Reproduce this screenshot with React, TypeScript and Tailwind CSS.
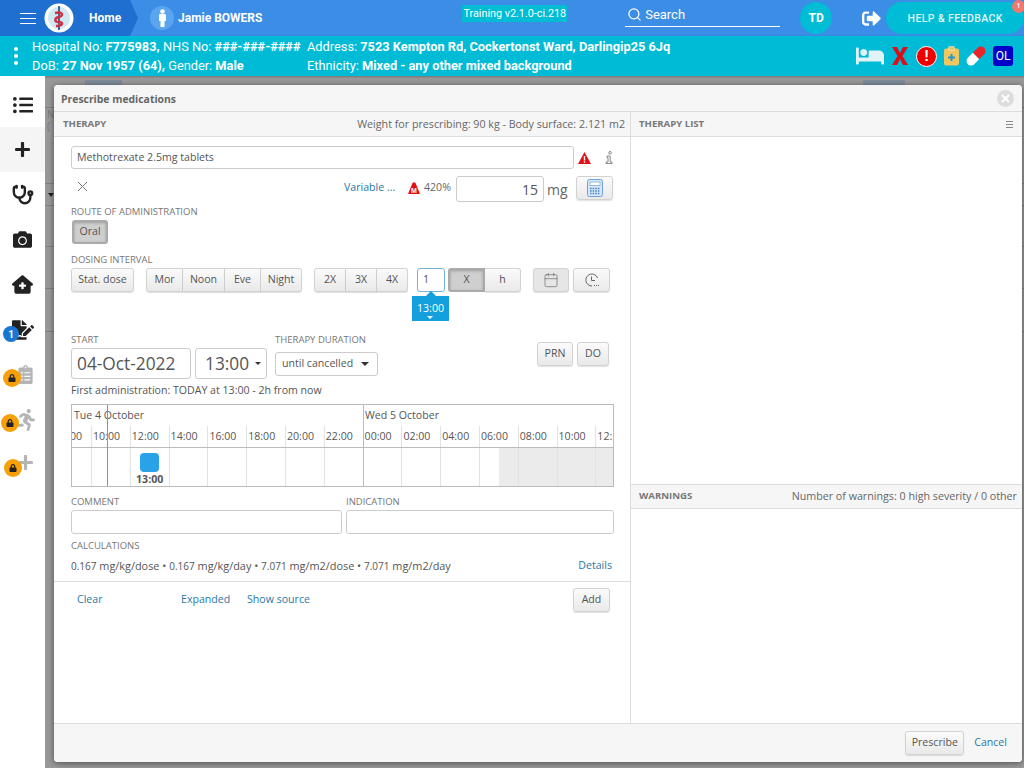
import { Calendar, Search, Stethoscope } from "lucide-react";
import { FaCamera, FaListUl, FaLock, FaPlus, FaRunning, FaSignOutAlt, FaBed, FaFileSignature, FaClipboardList } from "react-icons/fa";
import { FaHouseMedical } from "react-icons/fa6";

const label = "text-[9.5px] leading-[12px] text-[#777] uppercase";
const btn =
  "flex items-center justify-center h-[24px] border border-[#d2d2d2] rounded-[3px] bg-gradient-to-b from-[#fbfbfb] to-[#e9e9e9] text-[10.6px] text-[#555] shadow-[0_1px_1px_rgba(0,0,0,0.12)]";
const pressed = "border-2 !border-[#aaa] !bg-none bg-[#cfcfcf] !shadow-[inset_0_1px_3px_rgba(0,0,0,0.25)]";
const link = "text-[10.6px] text-[#2b78a8]";
const hours = ["08:00", "10:00", "12:00", "14:00", "16:00", "18:00", "20:00", "22:00", "00:00", "02:00", "04:00", "06:00", "08:00", "10:00", "12:"];

function Logo() {
  return (
    <svg width="30" height="30" viewBox="0 0 30 30" className="shrink-0">
      <circle cx="15" cy="15" r="14.5" fill="#fff" />
      <circle cx="15" cy="15" r="11" fill="#cfe8f3" />
      <path d="M15 3 L15 27" stroke="#20446e" strokeWidth="1.6" />
      <path d="M11 10 C 19 8 20 13 15 14 C 10 15 10 19 15 19 C 20 19 19 23 12 23" stroke="#d03040" strokeWidth="2.4" fill="none" />
    </svg>
  );
}

function Locked({ children, left }: { children: React.ReactNode; left: string }) {
  return (
    <div className="relative h-[45px] flex items-center justify-center text-[#b5b5b5]">
      {children}
      <span className={`absolute ${left} top-[17px] w-[18px] h-[18px] rounded-full bg-[#f7a008] flex items-center justify-center text-[#222]`}>
        <FaLock size={8} />
      </span>
    </div>
  );
}

function Sidebar() {
  return (
    <div className="w-[45px] shrink-0 bg-white flex flex-col text-[#222] pt-[6px]">
      <div className="h-[45px] flex items-center justify-center">
        <FaListUl size={20} />
      </div>
      <div className="h-[45px] flex items-center justify-center bg-[#f5f5f5]">
        <FaPlus size={17} />
      </div>
      <div className="h-[45px] flex items-center justify-center">
        <Stethoscope size={22} strokeWidth={2.6} />
      </div>
      <div className="h-[45px] flex items-center justify-center">
        <FaCamera size={19} />
      </div>
      <div className="h-[45px] flex items-center justify-center">
        <FaHouseMedical size={21} />
      </div>
      <div className="relative h-[45px] flex items-center justify-center">
        <FaFileSignature size={22} />
        <span className="absolute left-[3px] top-[19px] w-[16px] h-[16px] rounded-full bg-[#1976d2] text-white text-[10px] font-bold flex items-center justify-center font-['Roboto',sans-serif]">
          1
        </span>
      </div>
      <Locked left="left-[3px]">
        <span className="ml-[6px]">
          <FaClipboardList size={19} />
        </span>
      </Locked>
      <Locked left="left-[1px]">
        <span className="ml-[6px]">
          <FaRunning size={22} />
        </span>
      </Locked>
      <Locked left="left-[4px]">
        <span className="ml-[6px] mt-[-4px]">
          <FaPlus size={17} />
        </span>
      </Locked>
    </div>
  );
}

function PageBehind() {
  return (
    <div className="flex-1 min-w-0 flex flex-col">
      <div className="flex h-[9px] pt-[4px]">
        <div className="ml-[40px] w-[37px] bg-[#7f8c99]" />
        <div className="ml-[741px] w-[42px] bg-[#7f8c99]" />
      </div>
      <div className="h-[23px] border-b border-[#808080]" />
      <div className="h-[76px] border-b border-[#808080] pl-[2px] text-[10px] leading-[12px] text-[#777]">
        N
        <br />(
      </div>
      <div className="h-[22px] border-b border-[#808080] flex items-center pl-[3px]">
        <span className="w-0 h-0 border-x-[3px] border-x-transparent border-t-[4px] border-t-[#222]" />
      </div>
      <div className="h-[41px] border-b border-[#808080]" />
      <div className="h-[42px] border-b border-[#808080]" />
      <div className="h-[43px] border-b border-[#808080]" />
    </div>
  );
}

function Timeline() {
  return (
    <div className="relative mt-[6px] w-[543px] h-[83px] border border-[#bbb] overflow-hidden text-[#555]">
      <div className="flex h-[21px] items-center text-[10.6px]">
        <span className="w-[291px] pl-[2px]">Tue 4 October</span>
        <span className="h-full flex items-center pl-px border-l border-[#bbb]">Wed 5 October</span>
      </div>
      <div className="grid grid-cols-[19px_repeat(14,38.8px)] h-[22px] text-[10.6px] border-b border-[#bbb]">
        {hours.map((h, i) => (
          <div
            key={i}
            className={`flex items-center overflow-hidden whitespace-nowrap ${i === 0 ? "justify-end pr-[9px]" : "pl-px border-l"} ${i === 8 ? "border-[#bbb]" : "border-[#e2e2e2]"}`}
          >
            {h}
          </div>
        ))}
      </div>
      <div className="grid grid-cols-[19px_repeat(14,38.8px)] h-[39px]">
        {hours.map((h, i) => (
          <div key={i} className={`relative ${i === 0 ? "" : "border-l"} ${i === 8 ? "border-[#bbb]" : "border-[#e2e2e2]"}`}>
            {i > 10 && <div className={`absolute inset-y-0 right-0 bg-[#ebebeb] ${i === 11 ? "w-[19px]" : "left-0"}`} />}
            {i === 2 && (
              <div className="flex flex-col items-center pt-[5px]">
                <div className="w-[19px] h-[19px] rounded-[4px] bg-[#29a3e8]" />
                <span className="text-[10.6px] leading-[14px] font-bold text-[#555]">13:00</span>
              </div>
            )}
          </div>
        ))}
      </div>
      <div className="absolute left-[35px] top-0 bottom-0 w-px bg-[#d9756b]" />
    </div>
  );
}

function TherapyPanel() {
  return (
    <div className="w-[577px] shrink-0 border-r border-[#ddd] flex flex-col">
      <div className="h-[25px] flex items-center justify-between pl-[9px] pr-[5px] bg-[#f6f6f6] border-b border-[#ddd]">
        <span className="text-[9.6px] font-bold text-[#777]">THERAPY</span>
        <span className="text-[10.7px] text-[#666]">Weight for prescribing: 90 kg - Body surface: 2.121 m2</span>
      </div>
      <div className="pl-[17px] pr-[16px] pt-[9px] flex-none">
        <div className="flex items-center">
          <div className="w-[503px] h-[23px] border border-[#ccc] rounded-[3px] px-[5px] flex items-center text-[10.6px] text-[#555]">
            Methotrexate 2.5mg tablets
          </div>
          <svg width="13" height="12" viewBox="0 0 13 12" className="ml-[4px]">
            <path d="M6.5 0 L13 12 L0 12 Z" fill="#e30f17" />
            <rect x="5.8" y="4" width="1.4" height="4.5" fill="#fff" />
            <rect x="5.8" y="9.3" width="1.4" height="1.5" fill="#fff" />
          </svg>
          <svg width="8" height="13" viewBox="0 0 8 13" fill="none" stroke="#888" strokeWidth="1" className="ml-[14px]">
            <circle cx="5" cy="1.8" r="1.3" />
            <path d="M2 5 H5.2 V11 H7 V12.5 H1 V11 H3 V6.5 H2 Z" />
          </svg>
        </div>
        <div className="flex items-center h-[26px] mt-[7px]">
          <span className="w-[24px] pl-[6px] -translate-y-[3px]">
            <svg width="11" height="11" viewBox="0 0 11 11" stroke="#777" strokeWidth="1">
              <path d="M1 1 L10 10 M10 1 L1 10" />
            </svg>
          </span>
          <span className={`${link} ml-[249px] w-[64px] -translate-y-px`}>Variable ...</span>
          <svg width="12" height="12" viewBox="0 0 12 12" className="-translate-y-px">
            <path d="M4.5 1 Q6 -0.5 7.5 1 L12 12 H0 Z" fill="#e30f17" />
            <text x="6" y="10.5" fontSize="7" fontWeight="700" fill="#fff" textAnchor="middle" fontFamily="Liberation Sans">M</text>
          </svg>
          <span className="ml-[4px] w-[27px] text-[10.6px] text-[#666] -translate-y-px">420%</span>
          <div className="ml-[5px] w-[88px] h-[26px] border border-[#ccc] rounded-[3px] flex items-center justify-end pr-[5px] text-[14px] text-[#555]">
            15
          </div>
          <span className="ml-[3px] text-[14px] text-[#666] w-[29px]">mg</span>
          <div className={`${btn} w-[37px] -translate-y-px`}>
            <svg width="16" height="18" viewBox="0 0 16 18" fill="none">
              <rect x="0.5" y="0.5" width="15" height="17" rx="2" fill="#d8e8f8" stroke="#6fa0d6" />
              <rect x="3" y="3" width="10" height="3.5" fill="#fff" stroke="#6fa0d6" strokeWidth="0.7" />
              <path d="M3 9.5h10M3 12h10M3 14.5h10" stroke="#4a86c5" strokeWidth="1.3" strokeDasharray="1.6 1" />
            </svg>
          </div>
        </div>
        <div className={`${label} mt-[4px]`}>Route of administration</div>
        <div className={`${btn} ${pressed} mt-[2px] ml-px w-[36px]`}>Oral</div>
        <div className={`${label} mt-[10px]`}>Dosing interval</div>
        <div className="flex mt-[2px] items-start">
          <div className={`${btn} w-[63px]`}>Stat. dose</div>
          <div className="ml-[12px] flex">
            <div className={`${btn} w-[37px] rounded-r-none`}>Mor</div>
            <div className={`${btn} w-[42px] rounded-none border-l-0`}>Noon</div>
            <div className={`${btn} w-[36px] rounded-none border-l-0`}>Eve</div>
            <div className={`${btn} w-[41px] rounded-l-none border-l-0`}>Night</div>
          </div>
          <div className="ml-[12px] flex">
            <div className={`${btn} w-[32px] rounded-r-none`}>2X</div>
            <div className={`${btn} w-[31px] rounded-none border-l-0`}>3X</div>
            <div className={`${btn} w-[31px] rounded-l-none border-l-0`}>4X</div>
          </div>
          <div className="relative ml-[9px]">
            <div className="w-[28px] h-[24px] border border-[#6db3de] rounded-[3px] flex items-center pl-[5px] text-[10.6px] text-[#555]">1</div>
            <div className="absolute left-[-5px] top-[28px] w-[37px] h-[25px] bg-[#14a0dd] text-white text-[10.6px] flex items-center justify-center">
              <span className="absolute top-[-5px] left-[13px] w-0 h-0 border-x-[6px] border-x-transparent border-b-[6px] border-b-[#14a0dd]" />
              13:00
              <span className="absolute bottom-[2px] left-[15px] w-0 h-0 border-x-[3px] border-x-transparent border-t-[3px] border-t-white" />
            </div>
          </div>
          <div className="ml-[3px] flex">
            <div className={`${btn} ${pressed} w-[37px] rounded-r-none`}>X</div>
            <div className={`${btn} w-[36px] rounded-l-none border-l-0`}>h</div>
          </div>
          <div className={`${btn} ml-[12px] w-[36px] !bg-none bg-[#e6e6e6]`}>
            <Calendar size={16} strokeWidth={1} color="#666" />
          </div>
          <div className={`${btn} ml-[4px] w-[37px]`}>
            <svg width="16" height="16" viewBox="0 0 16 16" fill="none" stroke="#666" strokeWidth="1">
              <path d="M13.5 6 A6 6 0 1 0 8 14" />
              <path d="M7.5 4.5 V8.5 H11" />
              <path d="M10 13.5h1M12 13.5h1M14 13.5h1" />
            </svg>
          </div>
        </div>
        <div className="flex mt-[42px]">
          <div className="w-[204px]">
            <div className={label}>Start</div>
            <div className="flex gap-[4px] mt-[2px]">
              <div className="w-[120px] h-[31px] border border-[#ccc] rounded-[3px] flex items-center pl-[5px] text-[17.3px] text-[#555]">04-Oct-2022</div>
              <div className="w-[72px] h-[31px] border border-[#ccc] rounded-[3px] flex items-center pl-[9px] text-[17.3px] text-[#555]">
                13:00
                <span className="ml-[6px] w-0 h-0 border-x-[3px] border-x-transparent border-t-[3px] border-t-[#333]" />
              </div>
            </div>
          </div>
          <div className="w-[262px]">
            <div className={label}>Therapy duration</div>
            <div className="mt-[6px] w-[103px] h-[24px] border border-[#ccc] rounded-[3px] flex items-center pl-[6px] text-[10.6px] text-[#555]">
              until cancelled
              <span className="ml-[8px] w-0 h-0 border-x-[4px] border-x-transparent border-t-[4px] border-t-[#333]" />
            </div>
          </div>
          <div className="flex gap-[4px] items-start mt-[3px] pt-[5px]">
            <div className={`${btn} w-[36px]`}>PRN</div>
            <div className={`${btn} w-[32px]`}>DO</div>
          </div>
        </div>
        <div className="mt-[4px] text-[10.6px] leading-[15px] text-[#555]">First administration: TODAY at 13:00 - 2h from now</div>
        <Timeline />
        <div className="flex gap-[4px] mt-[9px] w-[543px]">
          <div className="w-[271px]">
            <div className={label}>Comment</div>
            <div className="mt-[2px] h-[24px] border border-[#ccc] rounded-[3px]" />
          </div>
          <div className="flex-1">
            <div className={label}>Indication</div>
            <div className="mt-[2px] h-[24px] border border-[#ccc] rounded-[3px]" />
          </div>
        </div>
        <div className={`${label} mt-[6px]`}>Calculations</div>
        <div className="flex items-center justify-between w-[541px] mt-[6px] h-[16px] text-[#555] text-[10.9px]">
          <span>
            <span className="text-[10px]">0.167</span> mg/kg/dose • <span className="text-[10px]">0.167</span> mg/kg/day • <span className="text-[10px]">7.071</span> mg/m2/dose • <span className="text-[10px]">7.071</span> mg/m2/day
          </span>
          <span className={link}>Details</span>
        </div>
      </div>
      <div className="mt-[7px] border-t border-[#ddd] pt-[6px] pl-[23px] pr-[20px] flex items-center">
        <span className={`${link} w-[104px]`}>Clear</span>
        <span className={`${link} w-[66px]`}>Expanded</span>
        <span className={link}>Show source</span>
        <div className={`${btn} ml-auto w-[37px]`}>Add</div>
      </div>
    </div>
  );
}

function RightPanel() {
  return (
    <div className="flex-1 flex flex-col">
      <div className="h-[25px] flex items-center justify-between pl-[8px] pr-[9px] bg-[#f6f6f6] border-b border-[#ddd]">
        <span className="text-[9.6px] font-bold text-[#777]">THERAPY LIST</span>
        <span className="w-[7px] h-[7px] border-y border-[#888] flex items-center">
          <span className="w-full h-px bg-[#888]" />
        </span>
      </div>
      <div className="h-[347px]" />
      <div className="h-[25px] flex items-center justify-between pl-[8px] pr-[5px] bg-[#f6f6f6] border-y border-[#ddd]">
        <span className="text-[9.6px] font-bold text-[#777]">WARNINGS</span>
        <span className="text-[10.7px] text-[#666]">Number of warnings: 0 high severity / 0 other</span>
      </div>
    </div>
  );
}

export default function App() {
  return (
    <div className="relative w-[1024px] h-[768px] overflow-hidden bg-[#999] font-['Open_Sans',sans-serif]">
      <div className="h-[36px] flex items-center bg-[#3b8de6] text-white font-['Roboto',sans-serif]">
        <div className="relative h-full w-[130px] shrink-0 bg-[#1e6fcf] flex items-center pl-[20px]">
          <span className="flex flex-col gap-[4px] w-[16px]">
            <span className="h-px bg-white" />
            <span className="h-px bg-white" />
            <span className="h-px bg-white" />
          </span>
          <span className="ml-[8px]">
            <Logo />
          </span>
          <span className="ml-[15px] text-[12px] font-bold">Home</span>
          <span className="absolute left-[130px] top-0 w-0 h-0 border-y-[18px] border-y-transparent border-l-[8px] border-l-[#1e6fcf]" />
        </div>
        <div className="ml-[20px] w-[24px] h-[24px] rounded-full bg-[#5aa5f0] flex items-center justify-center shrink-0">
          <svg width="9" height="18" viewBox="0 0 9 18" fill="#fff">
            <circle cx="4.5" cy="2.5" r="2.3" />
            <path d="M1 6 Q1 5 2 5 H7 Q8 5 8 6 V12 H6.5 V18 H2.5 V12 H1 Z" />
          </svg>
        </div>
        <span className="ml-[4px] text-[12px] font-bold whitespace-nowrap shrink-0">Jamie BOWERS</span>
        <span className="ml-[200px] mt-[-10px] bg-[#00bcd4] text-[10.8px] leading-[17px] px-px whitespace-nowrap shrink-0">Training v2.1.0-ci.218</span>
        <div className="ml-[58px] w-[155px] h-[24px] mt-[-6px] border-b border-white flex items-center gap-[3px] pl-[2px] text-[13px] shrink-0">
          <Search size={15} strokeWidth={2} />
          Search
        </div>
        <div className="ml-[20px] w-[32px] h-[32px] rounded-full bg-[#00bcd4] flex items-center justify-center text-[12px] font-bold shrink-0">TD</div>
        <span className="ml-[30px] shrink-0">
          <FaSignOutAlt size={19} />
        </span>
        <div className="relative ml-[5px] w-[138px] h-[32px] pt-px rounded-[16px] bg-[#00bcd4] flex items-center justify-center text-[10.5px] font-medium tracking-[0.4px] text-[#e2f7fa] shrink-0 whitespace-nowrap">
          HELP &amp; FEEDBACK
          <span className="absolute right-[-1px] top-[-2px] w-[13px] h-[13px] rounded-full bg-[#f0786e] text-[7px] text-white flex items-center justify-center">1</span>
        </div>
      </div>
      <div className="h-[40px] flex items-center bg-[#00bbd5] text-white text-[12.8px] leading-[19px] font-['Roboto',sans-serif] shadow-[0_1px_2px_rgba(0,0,0,0.25)]">
        <span className="w-[32px] flex flex-col items-center gap-[3px]">
          <span className="w-[4px] h-[4px] rounded-full bg-white" />
          <span className="w-[4px] h-[4px] rounded-full bg-white" />
          <span className="w-[4px] h-[4px] rounded-full bg-white" />
        </span>
        <div className="w-[275px] whitespace-nowrap pb-px">
          <div>
            Hospital No: <b className="font-bold">F775983,</b> NHS No: <b className="font-bold">###-###-####</b>
          </div>
          <div>
            DoB: <b className="font-bold">27 Nov 1957 (64),</b> Gender: <b className="font-bold">Male</b>
          </div>
        </div>
        <div className="w-[549px] whitespace-nowrap pb-px">
          <div>
            Address: <b className="font-bold">7523 Kempton Rd, Cockertonst Ward, Darlingip25 6Jq</b>
          </div>
          <div>
            Ethnicity: <b className="font-bold">Mixed - any other mixed background</b>
          </div>
        </div>
        <div className="flex items-center gap-[7px]">
          <span className="text-[#dff3f8]">
            <FaBed size={28} />
          </span>
          <svg width="18" height="20" viewBox="0 0 18 20">
            <path d="M1 1 H6 L9 7 L12 1 H17 L11.5 10 L17 19 H12 L9 13 L6 19 H1 L6.5 10 Z" fill="#d8101c" />
          </svg>
          <span className="w-[21px] h-[21px] rounded-full bg-[#ee0000] border border-white text-white font-bold text-[15px] flex items-center justify-center">!</span>
          <svg width="15" height="20" viewBox="0 0 15 20">
            <rect x="0" y="2.5" width="15" height="17" rx="2" fill="#f0c75e" />
            <rect x="4.5" y="0.5" width="6" height="4" rx="1" fill="#f0c75e" stroke="#e8f0e0" strokeWidth="0.6" />
            <path d="M7.5 8 V15 M4 11.5 H11" stroke="#2b94c0" strokeWidth="2" />
          </svg>
          <svg width="20" height="20" viewBox="0 0 20 20" className="overflow-visible">
            <g transform="rotate(-45 10 10)">
              <path d="M10 5.5 H17 A4.5 4.5 0 0 1 17 14.5 H10 Z" fill="#e8262a" />
              <path d="M10 5.5 H3 A4.5 4.5 0 0 0 3 14.5 H10 Z" fill="#fff" />
            </g>
          </svg>
          <span className="w-[20px] h-[20px] rounded-[3px] bg-[#0000c8] flex items-center justify-center text-[12px] text-white">OL</span>
        </div>
      </div>
      <div className="flex h-[692px]">
        <Sidebar />
        <PageBehind />
      </div>
      <div className="absolute left-[54px] top-[85px] w-[968px] h-[677px] bg-white rounded-[4px] shadow-[0_1px_6px_rgba(0,0,0,0.5)] flex flex-col overflow-hidden">
        <div className="h-[27px] shrink-0 flex items-center justify-between pl-[7px] pr-[8px] bg-[#f6f6f6] border-b border-[#ddd]">
          <span className="text-[10.4px] font-bold text-[#666] pt-[3px]">Prescribe medications</span>
          <span className="w-[17px] h-[17px] rounded-full bg-[#ddd] flex items-center justify-center">
            <svg width="9" height="9" viewBox="0 0 9 9" stroke="#fff" strokeWidth="2">
              <path d="M1 1 L8 8 M8 1 L1 8" />
            </svg>
          </span>
        </div>
        <div className="flex flex-1 min-h-0">
          <TherapyPanel />
          <RightPanel />
        </div>
        <div className="h-[39px] shrink-0 flex items-center justify-end gap-[10px] pr-[15px] bg-[#f6f6f6] border-t border-[#ddd]">
          <div className={`${btn} w-[59px]`}>Prescribe</div>
          <span className={link}>Cancel</span>
        </div>
      </div>
    </div>
  );
}
